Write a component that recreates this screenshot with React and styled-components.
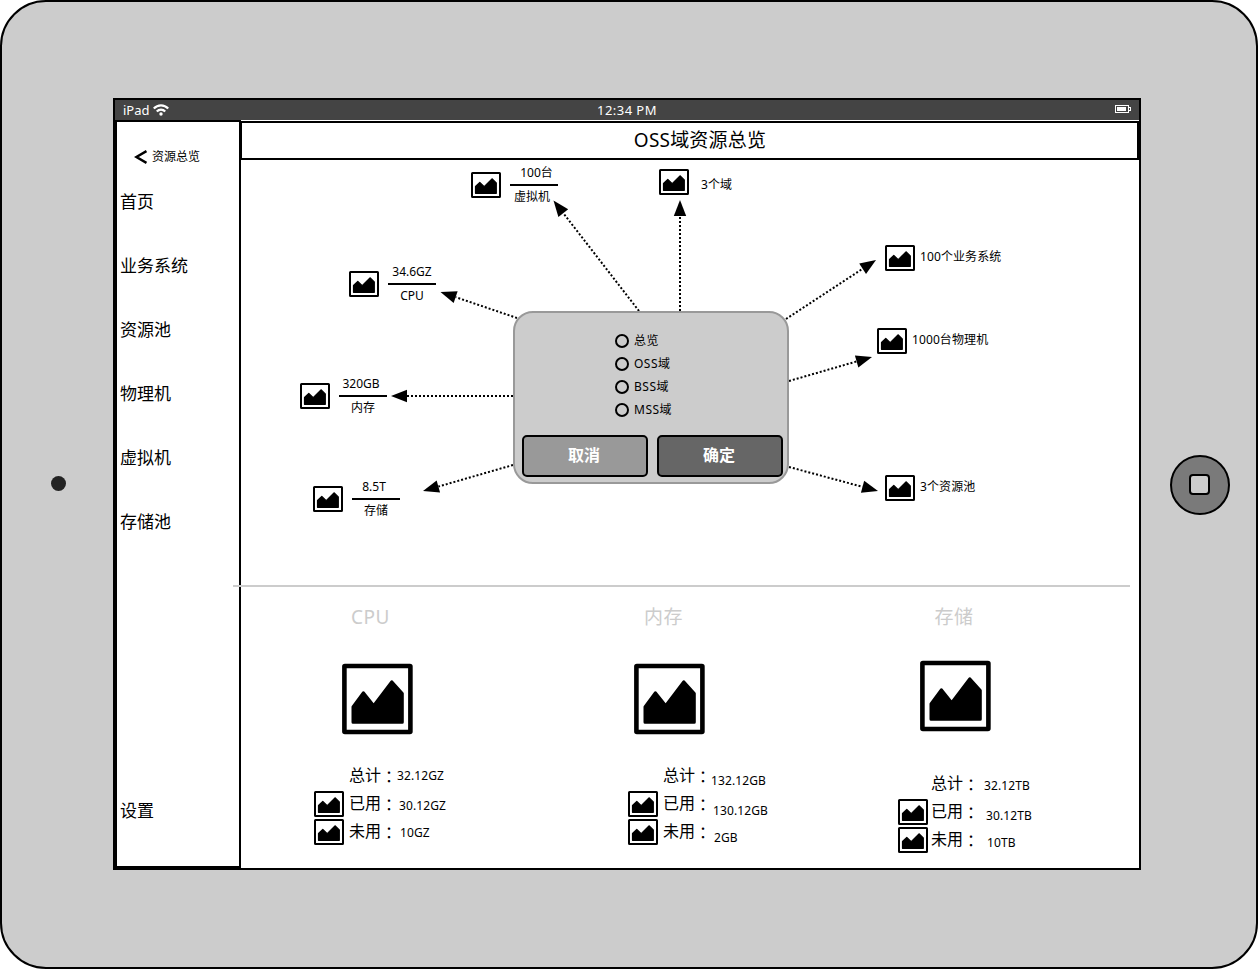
import React from "react";
import styled, { createGlobalStyle } from "styled-components";

const GlobalStyle = createGlobalStyle`
  * { box-sizing: border-box; }
  body {
    margin: 0;
    background: #fff;
    color: #000;
    font-family: "Noto Sans", "Noto Sans CJK SC", sans-serif;
    font-size: 12px;
    line-height: 16px;
  }
`;

const Device = styled.div`
  display: flex;
  width: 1258px;
  height: 969px;
  overflow: hidden;
  background: #ccc;
  border: 2px solid #000;
  border-radius: 46px;
`;

const Bezel = styled.div`
  flex: none;
  display: flex;
  align-items: flex-start;
  width: ${(p) => p.$width}px;
`;

const Camera = styled.div`
  width: 15px;
  height: 15px;
  margin: 474px 0 0 49px;
  border-radius: 50%;
  background: #222;
`;

const HomeButton = styled.div`
  display: flex;
  align-items: center;
  justify-content: center;
  width: 60px;
  height: 60px;
  margin: 453px 0 0 29px;
  background: #7a7a7a;
  border: 2px solid #000;
  border-radius: 50%;
`;

const HomeGlyph = styled.div`
  width: 21px;
  height: 21px;
  margin: 0 1px 1px 0;
  background: #ccc;
  border: 2px solid #000;
  border-radius: 4px;
`;

const Screen = styled.div`
  flex: none;
  display: flex;
  flex-direction: column;
  width: 1028px;
  height: 772px;
  margin-top: 96px;
  background: #fff;
  border: 2px solid #000;
`;

const StatusBar = styled.header`
  flex: none;
  display: grid;
  grid-template-columns: 1fr auto 1fr;
  align-items: center;
  height: 20px;
  padding: 0 8px;
  background: #444;
  color: #fff;
  font-size: 13px;
`;

const Carrier = styled.div`
  display: flex;
  align-items: center;
  gap: 3px;
`;

const Clock = styled.span`
  letter-spacing: 0.45px;
`;

const Battery = styled.svg`
  justify-self: end;
  margin-bottom: 2px;
`;

const Body = styled.div`
  flex: 1;
  display: flex;
  min-height: 0;
`;

const Sidebar = styled.nav`
  flex: none;
  display: flex;
  flex-direction: column;
  width: 126px;
  padding: 26px 0 43px 3px;
  border: 2px solid #000;
`;

const BackLink = styled.div`
  display: flex;
  align-items: center;
  gap: 5px;
  height: 18px;
  margin: 0 0 24px 14px;
`;

const MenuItem = styled.div`
  height: 24px;
  margin-bottom: ${(p) => (p.$last ? 0 : 40)}px;
  margin-top: ${(p) => (p.$last ? "auto" : 0)};
  font-size: 17px;
  line-height: 24px;
`;

const Main = styled.main`
  flex: none;
  display: flex;
  flex-direction: column;
  width: 899px;
  margin-left: -1px;
  padding-top: 1px;
`;

const Title = styled.h1`
  flex: none;
  height: 39px;
  margin: 0;
  padding-left: 21px;
  border: 2px solid #000;
  font-size: 19px;
  font-weight: 400;
  letter-spacing: 0.2px;
  line-height: 34px;
  text-align: center;
`;

const Canvas = styled.section`
  flex: none;
  position: relative;
  height: 425px;
`;

const Arrows = styled.svg`
  position: absolute;
  inset: 0;
`;

const Node = styled.div`
  position: absolute;
  left: ${(p) => p.$x - 240}px;
  top: ${(p) => p.$y - 160}px;
  display: flex;
  align-items: center;
  white-space: nowrap;
`;

const NodeText = styled.span`
  margin-left: ${(p) => p.$gap}px;
  padding-top: ${(p) => p.$drop}px;
  padding-bottom: 2px;
  letter-spacing: 0.1px;
`;

const Fraction = styled.div`
  width: 48px;
  height: 42px;
  margin-left: 9px;
  margin-top: 4px;
  text-align: center;
`;

const FractionTop = styled.div`
  height: 20px;
  padding-left: ${(p) => Math.max(p.$shift, 0)}px;
  padding-right: ${(p) => Math.max(-p.$shift, 0)}px;
  border-bottom: 2px solid #000;
  line-height: 14px;
`;

const FractionBottom = styled.div`
  padding-top: 3px;
  padding-right: ${(p) => p.$shift}px;
`;

const Dialog = styled.div`
  position: absolute;
  left: 273px;
  top: 151px;
  display: flex;
  flex-direction: column;
  width: 276px;
  height: 173px;
  padding: 16px 4px 5px 7px;
  background: #ccc;
  border: 2px solid #999;
  border-radius: 20px;
`;

const Radio = styled.div`
  display: flex;
  align-items: center;
  gap: 5px;
  height: 23px;
  margin-left: 93px;
  letter-spacing: 0.5px;
`;

const RadioCircle = styled.span`
  width: 14px;
  height: 14px;
  border: 2px solid #000;
  border-radius: 50%;
`;

const Actions = styled.div`
  display: flex;
  gap: 9px;
  margin-top: auto;
`;

const Button = styled.button`
  width: 126px;
  height: 42px;
  padding: 0 2px 2px 0;
  background: ${(p) => (p.$primary ? "#666" : "#999")};
  border: 2px solid #000;
  border-radius: 5px;
  color: #fff;
  font: 700 16px/24px "Noto Sans", "Noto Sans CJK SC", sans-serif;
`;

const Divider = styled.hr`
  flex: none;
  position: relative;
  width: 897px;
  height: 2px;
  margin: 0 0 0 -7px;
  border: 0;
  background: #ccc;
`;

const Stats = styled.section`
  display: flex;
  align-items: flex-start;
  padding-left: 74px;
`;

const Stat = styled.article`
  flex: none;
  display: flex;
  flex-direction: column;
  width: ${(p) => p.$width}px;
`;

const StatTitle = styled.h2`
  height: 28px;
  margin: 16px 0 0 ${(p) => p.$indent}px;
  color: #ccc;
  font-size: 19px;
  font-weight: 400;
  letter-spacing: 0.5px;
  line-height: 28px;
`;

const StatPicture = styled.div`
  height: 71px;
  margin: ${(p) => p.$top}px 0 ${(p) => p.$bottom}px ${(p) => p.$indent}px;
`;

const StatRow = styled.div`
  display: grid;
  grid-template-columns: 30px ${(p) => p.$label}px auto;
  height: 28px;
  white-space: nowrap;
`;

const StatLabel = styled.span`
  padding-left: ${(p) => p.$pad}px;
  font-size: 16px;
  line-height: 24px;
`;

const Colon = styled.span`
  font-family: "Noto Sans CJK TC", sans-serif;
  line-height: 0;
  vertical-align: -2px;
`;

const StatValue = styled.span`
  padding: ${(p) => p.$drop}px 0 0 ${(p) => p.$indent}px;
  letter-spacing: 0.1px;
`;

function Picture() {
  return (
    <svg width="30" height="26" viewBox="0 0 30 26" display="block">
      <rect x="1" y="1" width="28" height="24" rx="0.5" fill="#fff" stroke="#000" strokeWidth="2" />
      <path d="M4.5 14.5 8.8 10.5 13.2 14.7 21 6.8 25.3 11V21.3H4.5Z" stroke="#000" strokeWidth="1.2" strokeLinejoin="round" />
    </svg>
  );
}

function BigPicture() {
  return (
    <svg width="71" height="71" viewBox="0 0 71 71" display="block" overflow="visible">
      <rect x="2.4" y="2" width="66" height="66" rx="0.5" fill="#fff" stroke="#000" strokeWidth="4.6" strokeLinejoin="round" />
      <path d="M11 42.8 21.3 28.8 31.7 41.6 49.7 17.8 60.3 29.6V58.2H11Z" stroke="#000" strokeWidth="3" strokeLinejoin="round" />
    </svg>
  );
}

function Arrow({ from, to }) {
  const [x1, y1] = from;
  const [x2, y2] = to;
  const length = Math.hypot(x2 - x1, y2 - y1);
  const ux = (x2 - x1) / length;
  const uy = (y2 - y1) / length;
  const bx = x2 - ux * 16;
  const by = y2 - uy * 16;
  return (
    <g>
      <line x1={x1} y1={y1} x2={bx} y2={by} stroke="#000" strokeWidth="2" strokeDasharray="2 2" />
      <polygon points={`${x2},${y2} ${bx - uy * 6.2},${by + ux * 6.2} ${bx + uy * 6.2},${by - ux * 6.2}`} />
    </g>
  );
}

const arrows = [
  { from: [639, 311], to: [553.5, 200.5] },
  { from: [680, 311], to: [680, 200] },
  { from: [517, 318], to: [440.5, 292] },
  { from: [513, 396], to: [391, 396] },
  { from: [513, 465], to: [423, 491] },
  { from: [786, 319], to: [876, 260] },
  { from: [789, 381], to: [872, 357] },
  { from: [789, 467], to: [878, 491] },
];

const fractions = [
  { x: 471, y: 162, top: "100台", bottom: "虚拟机", shift: 5, under: 4 },
  { x: 349, y: 261, top: "34.6GZ", bottom: "CPU" },
  { x: 300, y: 373, top: "320GB", bottom: "内存", shift: -4 },
  { x: 313, y: 476, top: "8.5T", bottom: "存储", shift: -4 },
];

const nodes = [
  { x: 659, y: 169, text: "3个域", gap: 12, drop: 7 },
  { x: 885, y: 245, text: "100个业务系统", gap: 5, drop: 0 },
  { x: 877, y: 328, text: "1000台物理机", gap: 5, drop: 0 },
  { x: 885, y: 475, text: "3个资源池", gap: 5, drop: 0 },
];

const stats = [
  {
    title: "CPU", width: 314, titleIndent: 37, picIndent: 28, picTop: 33, picBottom: 28, label: 53, pad: 5,
    rows: [["总计", "32.12GZ", 0, 5], ["已用", "30.12GZ", 2, 7], ["未用", "10GZ", 3, 6]],
  },
  {
    title: "内存", width: 270, titleIndent: 16, picIndent: 6, picTop: 33, picBottom: 28, label: 53, pad: 5,
    rows: [["总计", "132.12GB", 0, 10], ["已用", "130.12GB", 2, 12], ["未用", "2GB", 3, 11]],
  },
  {
    title: "存储", width: 200, titleIndent: 36.5, picIndent: 22, picTop: 30, picBottom: 39, label: 56, pad: 3,
    rows: [["总计", "32.12TB", 0, 7], ["已用", "30.12TB", 2, 9], ["未用", "10TB", 3, 8]],
  },
];

export default function App() {
  return (
    <>
      <GlobalStyle />
      <Device>
        <Bezel $width={111}>
          <Camera />
        </Bezel>
        <Screen>
          <StatusBar>
            <Carrier>
              iPad
              <svg width="16" height="12" viewBox="0 0 16 12" fill="none" stroke="#fff" strokeWidth="2.2">
                <path d="M0.8 4.6C4.8 0.2 11.2 0.2 15.2 4.6M3.8 7.5C6.2 4.9 9.8 4.9 12.2 7.5" />
                <circle cx="8" cy="10" r="1.7" fill="#fff" stroke="none" />
              </svg>
            </Carrier>
            <Clock>12:34 PM</Clock>
            <Battery width="16" height="8" viewBox="0 0 16 8" fill="none" stroke="#fff">
              <rect x="0.5" y="0.5" width="13" height="7" />
              <rect x="2" y="2" width="9" height="4" fill="#fff" stroke="none" />
              <rect x="13.5" y="2.5" width="2" height="3" />
            </Battery>
          </StatusBar>
          <Body>
            <Sidebar>
              <BackLink>
                <svg width="13" height="14" viewBox="0 0 13 14" fill="none" stroke="#000" strokeWidth="2.5">
                  <path d="M12.5 1.2 2.5 7 12.5 12.8" />
                </svg>
                资源总览
              </BackLink>
              {["首页", "业务系统", "资源池", "物理机", "虚拟机", "存储池"].map((item) => (
                <MenuItem key={item}>{item}</MenuItem>
              ))}
              <MenuItem $last>设置</MenuItem>
            </Sidebar>
            <Main>
              <Title>OSS域资源总览</Title>
              <Canvas>
                <Arrows width="899" height="425" viewBox="240 160 899 425">
                  {arrows.map((a) => (
                    <Arrow key={a.to.join()} {...a} />
                  ))}
                </Arrows>
                {fractions.map((f) => (
                  <Node key={f.bottom} $x={f.x} $y={f.y}>
                    <Picture />
                    <Fraction>
                      <FractionTop $shift={f.shift || 0}>{f.top}</FractionTop>
                      <FractionBottom $shift={f.under || 0}>{f.bottom}</FractionBottom>
                    </Fraction>
                  </Node>
                ))}
                {nodes.map((n) => (
                  <Node key={n.text} $x={n.x} $y={n.y}>
                    <Picture />
                    <NodeText $gap={n.gap} $drop={n.drop}>{n.text}</NodeText>
                  </Node>
                ))}
                <Dialog>
                  {["总览", "OSS域", "BSS域", "MSS域"].map((option) => (
                    <Radio key={option}>
                      <RadioCircle />
                      {option}
                    </Radio>
                  ))}
                  <Actions>
                    <Button>取消</Button>
                    <Button $primary>确定</Button>
                  </Actions>
                </Dialog>
              </Canvas>
              <Divider />
              <Stats>
                {stats.map((s) => (
                  <Stat key={s.title} $width={s.width}>
                    <StatTitle $indent={s.titleIndent}>{s.title}</StatTitle>
                    <StatPicture $top={s.picTop} $bottom={s.picBottom} $indent={s.picIndent}>
                      <BigPicture />
                    </StatPicture>
                    {s.rows.map(([label, value, indent, drop], i) => (
                      <StatRow key={label} $label={s.label}>
                        {i > 0 ? <Picture /> : <span />}
                        <StatLabel $pad={s.pad}>
                          {label}
                          <Colon lang="zh-TW">：</Colon>
                        </StatLabel>
                        <StatValue $indent={indent} $drop={drop}>{value}</StatValue>
                      </StatRow>
                    ))}
                  </Stat>
                ))}
              </Stats>
            </Main>
          </Body>
        </Screen>
        <Bezel $width={115}>
          <HomeButton>
            <HomeGlyph />
          </HomeButton>
        </Bezel>
      </Device>
    </>
  );
}
